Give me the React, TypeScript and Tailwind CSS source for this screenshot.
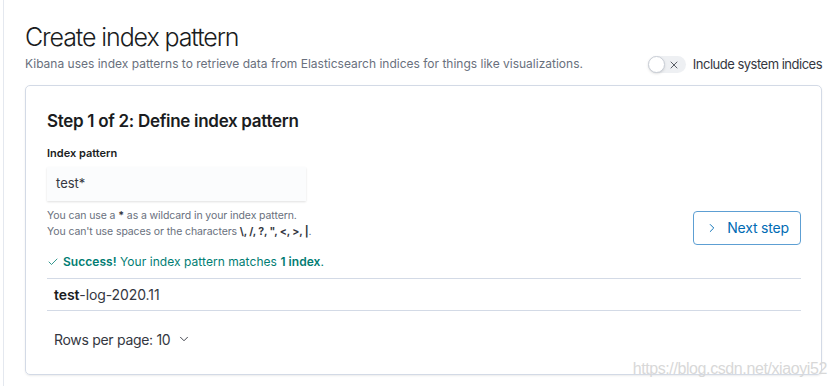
import { ChevronRight, ChevronDown, Check, X } from "lucide-react";

export default function App() {
  return (
    <div className="relative w-[831px] h-[386px] bg-white overflow-hidden font-['Inter',sans-serif] text-[#343741]">
      <div className="ml-[3px] h-full border-l border-[#e4e8ef] pl-[21px] pr-[9px] pt-[22px]">

        {/* HEADER */}
        <h1 className="text-[25px] leading-[30px] font-light text-[#1a1c21] tracking-[-1.1px]">
          Create index pattern
        </h1>

        <div className="flex items-center justify-between mt-[1px]">
          <p className="text-[12px] leading-[16px] text-[#69707d] tracking-[0px]">
            Kibana uses index patterns to retrieve data from Elasticsearch indices for things like visualizations.
          </p>

          <div className="flex items-center gap-[7px] mt-[2px]">
            <div className="relative flex items-center w-[38px] h-[17px] rounded-full bg-[#eef0f3]">
              <div className="w-[17px] h-[17px] rounded-full bg-white border border-[#c9ced6] shadow-sm" />
              <X size={12} strokeWidth={1.6} className="absolute right-[6px] text-[#343741]" />
            </div>
            <span className="text-[13px] tracking-[-0.5px] text-[#343741]">
              Include system indices
            </span>
          </div>
        </div>

        {/* CARD */}
        <div className="mt-[10px] h-[290px] rounded-[5px] border border-[#d3dae6] shadow-[0_1px_2px_rgba(0,0,0,0.08)] pl-[21px] pr-[20px] pt-[24px]">

          <h2 className="text-[17px] leading-[22px] font-semibold text-[#1a1c21] tracking-[-0.3px]">
            Step 1 of 2: Define index pattern
          </h2>

          <div className="flex items-start justify-between mt-[13px]">
            <div>
              <div className="text-[11px] leading-[16px] font-semibold text-[#1a1c21]">
                Index pattern
              </div>
              <div className="mt-[6px] w-[259px] h-[34px] flex items-center px-[9px] bg-[#fbfcfd] shadow-[0_1px_2px_rgba(0,0,0,0.12)] text-[13px] text-[#343741]">
                test*
              </div>
              <div className="mt-[7px] text-[10.5px] leading-[16px] text-[#69707d] tracking-[-0.1px]">
                <div>
                  You can use a <b className="font-bold text-[#343741]">*</b> as a wildcard in your index pattern.
                </div>
                <div>
                  You can't use spaces or the characters{" "}
                  <b className="font-bold text-[#343741]">\, /, ?, ", &lt;, &gt;, |</b>.
                </div>
              </div>
            </div>

            <button className="mt-[66px] flex items-center gap-[8px] h-[34px] w-[108px] justify-center rounded-[4px] border border-[#5d9fd3] text-[#006bb4] text-[14px] tracking-[-0.2px]">
              <ChevronRight size={14} strokeWidth={1.6} />
              Next step
            </button>
          </div>

          {/* SUCCESS */}
          <div className="flex items-center gap-[4px] mt-[9px] text-[12px] leading-[16px] text-[#017d73] tracking-[0.05px]">
            <Check size={12} strokeWidth={1.6} />
            <span>
              <b className="font-semibold">Success!</b> Your index pattern matches <b className="font-semibold">1 index</b>.
            </span>
          </div>

          {/* TABLE */}
          <div className="mt-[8px] border-t border-b border-[#d3dae6] h-[33px] flex items-center pl-[7px] text-[14px] text-[#343741] tracking-[-0.1px]">
            <span>
              <b className="font-semibold text-[#1a1c21]">test</b>-log-2020.11
            </span>
          </div>

          <div className="flex items-center gap-[7px] mt-[18px] pl-[7px] text-[14px] text-[#343741] tracking-[-0.3px]">
            Rows per page: 10
            <ChevronDown size={14} strokeWidth={1.6} />
          </div>
        </div>
      </div>

      {/* WATERMARK */}
      <div className="absolute right-[4px] bottom-[5px] text-[16px] font-['Liberation_Sans',sans-serif] text-[#d8d8d8] tracking-[-0.4px]">
        https://blog.csdn.net/xiaoyi52
      </div>
    </div>
  );
}
